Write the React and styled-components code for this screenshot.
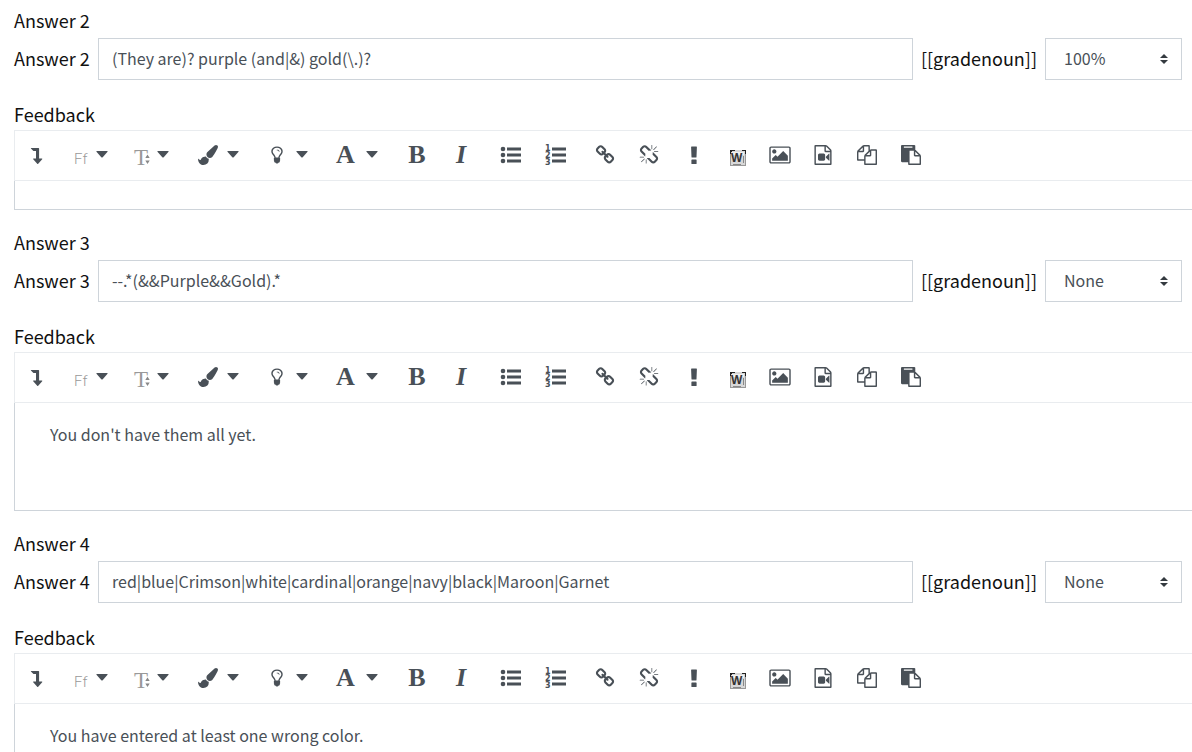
import React from "react";
import styled, { createGlobalStyle } from "styled-components";

const GlobalStyle = createGlobalStyle`
  * {
    box-sizing: border-box;
  }

  body {
    margin: 0;
    background: #fff;
    color: #111;
    font-family: "Noto Sans CJK SC", "Open Sans", sans-serif;
    font-size: 18px;
    line-height: 26px;
    overflow-x: hidden;
  }
`;

const Page = styled.main`
  padding: 7px 10px 0 14px;
`;

const AnswerBlock = styled.section`
  margin-bottom: 19px;
`;

const Title = styled.div`
  margin-bottom: 5px;
`;

const AnswerRow = styled.div`
  display: flex;
  align-items: center;
  margin-bottom: 21px;
`;

const AnswerLabel = styled.label`
  width: 84px;
  padding-bottom: 2px;
`;

const AnswerInput = styled.input`
  flex: 1;
  min-width: 0;
  height: 42px;
  padding: 0 13px 2px;
  border: 1px solid #ced4da;
  color: #495057;
  font-family: inherit;
  font-size: 16px;
`;

const GradeLabel = styled.label`
  padding: 0 8px 2px;
`;

const SelectWrap = styled.div`
  position: relative;
  width: 137px;
`;

const GradeSelect = styled.select`
  display: block;
  width: 100%;
  height: 42px;
  padding: 0 18px 2px;
  border: 1px solid #ced4da;
  border-radius: 0;
  background: #fff;
  color: #495057;
  font-family: inherit;
  font-size: 16px;
  appearance: none;
`;

const SelectArrows = styled.svg`
  position: absolute;
  top: 16px;
  right: 14px;
  pointer-events: none;
`;

const FeedbackLabel = styled.div`
  height: 29px;
`;

/* the editor runs past the right edge of the page */
const Editor = styled.div`
  margin-right: -20px;
`;

const Toolbar = styled.div`
  display: flex;
  gap: 5px;
  height: 51px;
  border: 1px solid #e9ecef;
`;

const ToolGroup = styled.div`
  display: flex;
`;

const ToolButton = styled.button`
  display: flex;
  align-items: center;
  justify-content: center;
  gap: ${props => props.$gap || 0}px;
  width: ${props => props.$width || 44}px;
  padding: 0 0 2px;
  border: none;
  background: transparent;
  color: #495057;

  svg {
    display: block;
    fill: currentColor;
    overflow: visible;
  }
`;

const Letter = styled.span`
  width: 20px;
  font-family: "Liberation Serif", serif;
  font-size: 26px;
  font-weight: 700;
  font-style: ${props => (props.$italic ? "italic" : "normal")};
  line-height: 26px;
  text-align: center;
`;

const EditorContent = styled.div`
  min-height: ${props => props.$height}px;
  padding: ${props => (props.$height > 50 ? "18px 35px" : "0 35px")};
  border: 1px solid #ced4da;
  border-top: none;
  color: #495057;
  font-size: 16px;
`;

const Icon = ({ box = "0 0 1792 1792", width = 20, height = 20, d }) => (
  <svg width={width} height={height} viewBox={box} aria-hidden="true"><path d={d} /></svg>
);

const Caret = () => <Icon box="0 0 12 7" width={12} height={7} d="M.9 0h10.200q.9 0 .4.8L6.700 6.300q-.7.6-1.400 0L.5.800Q0 0 .9 0z" />;

const paths = {
  toggle: "M4.2 3h7.3q.6 0 .6.6V13.500h2.700q.9 0 .4.7l-4 4.600q-.5.5-1 0l-4-4.600q-.5-.7.4-.7H9V6H6.700q-.3 0-.5-.3L3.900 3.600Q3.600 3 4.200 3z",
  brush: "M1615 0q70 0 122.500 46.500t52.500 116.500q0 63-45 151-332 629-465 752-97 91-218 91-126 0-216.500-92.500t-90.500-219.500q0-128 92-212l638-579q59-54 130-54zm-909 1034q39 76 106.500 130t150.500 76l1 71q4 213-129.500 347t-348.500 134q-123 0-218-46.500t-152.500-127.500-86.500-183-29-220q7 5 41 30t62 44.500 59 36.500 46 17q41 0 55-37 25-66 57.500-112.500t69.500-76 88-47.500 103-25.500 125-10.500z",
  bulb: "M1120 576q0 13-9.500 22.500t-22.500 9.500-22.500-9.500-9.500-22.500q0-46-54-71t-106-25q-13 0-22.500-9.500t-9.500-22.500 9.500-22.500 22.500-9.500q50 0 99.500 16t87 54 37.500 90zm160 0q0-72-34.500-134t-90-101.500-123-62-136.500-22.500-136.500 22.500-123 62-90 101.500-34.500 134q0 101 68 180 10 11 30.500 33t30.500 33q128 153 141 298h228q13-145 141-298 10-11 30.500-33t30.500-33q68-79 68-180zm128 0q0 155-103 268-45 49-74.500 87t-59.500 95.500-34 107.500q47 28 47 82 0 37-25 64 25 27 25 64 0 52-45 81 13 23 13 47 0 46-31.500 71t-77.500 25q-20 44-60 70t-87 26-87-26-60-70q-46 0-77.500-25t-31.500-71q0-24 13-47-45-29-45-81 0-37 25-64-25-27-25-64 0-54 47-82-4-50-34-107.500t-59.500-95.500-74.500-87q-103-113-103-268 0-99 44.500-184.500t117-142 164-89 186.500-32.500 186.500 32.500 164 89 117 142 44.500 184.500z",
  link: "M1520 1216q0-40-28-68l-208-208q-28-28-68-28-42 0-72 32 3 3 19 18.500t21.500 21.500 15 19 13 25.500 3.500 27.500q0 40-28 68t-68 28q-15 0-27.500-3.500t-25.500-13-19-15-21.500-21.500-18.500-19q-33 31-33 73 0 40 28 68l206 207q27 27 68 27 40 0 68-26l147-146q28-28 28-67zm-703-705q0-40-28-68l-206-207q-28-28-68-28-39 0-68 27l-147 146q-28 28-28 67 0 40 28 68l208 208q27 27 68 27 42 0 72-31-3-3-19-18.500t-21.500-21.500-15-19-13-25.500-3.500-27.500q0-40 28-68t68-28q15 0 27.500 3.500t25.500 13 19 15 21.500 21.500 18.500 19q33-31 33-73zm895 705q0 120-85 203l-147 146q-83 83-203 83-121 0-204-85l-206-207q-83-83-83-203 0-123 88-209l-88-88q-86 88-208 88-120 0-204-84l-208-208q-84-84-84-204t85-203l147-146q83-83 203-83 121 0 204 85l206 207q83 83 83 203 0 123-88 209l88 88q86-88 208-88 120 0 204 84l208 208q84 84 84 204z",
  unlink: "M503 1271l-256 256q-10 9-23 9-12 0-23-9-9-10-9-23t9-23l256-256q10-9 23-9t23 9q9 10 9 23t-9 23zm169 41v320q0 14-9 23t-23 9-23-9-9-23v-320q0-14 9-23t23-9 23 9 9 23zm-224-224q0 14-9 23t-23 9h-320q-14 0-23-9t-9-23 9-23 23-9h320q14 0 23 9t9 23zm1264 128q0 120-85 203l-147 146q-83 83-203 83-121 0-204-85l-334-335q-21-21-42-56l239-18 273 274q28 28 68 27.500t68-27.500l147-146q28-28 28-67 0-40-28-68l-274-275 18-239q35 21 56 42l336 336q84 86 84 204zm-617-724l-239 18-273-274q-28-28-68-28-39 0-68 27l-147 146q-28 28-28 67 0 40 28 68l274 274-18 240q-35-21-56-42l-336-336q-84-86-84-204 0-120 85-203l147-146q83-83 203-83 121 0 204 85l334 335q21 21 42 56zm633 84q0 14-9 23t-23 9h-320q-14 0-23-9t-9-23 9-23 23-9h320q14 0 23 9t9 23zm-544-544v320q0 14-9 23t-23 9-23-9-9-23v-320q0-14 9-23t23-9 23 9 9 23zm407 151l-256 256q-11 9-23 9t-23-9q-9-10-9-23t9-23l256-256q10-9 23-9t23 9q9 10 9 23t-9 23z",
  exclamation: "M7.600 1.500h4.800q.5 0 .5.5l-.4 10q0 .6-.6.6H8.100q-.6 0-.6-.6l-.4-10q0-.5.5-.5zM8 14.400h4q.6 0 .6.6v3.400q0 .6-.6.6H8q-.6 0-.6-.6V15q0-.6.6-.6z",
  picture: "M576 576q0 80-56 136t-136 56-136-56-56-136 56-136 136-56 136 56 56 136zm1024 384v448h-1408v-192l320-320 160 160 512-512zm96-704h-1600q-13 0-22.500 9.500t-9.500 22.500v1216q0 13 9.500 22.500t22.500 9.500h1600q13 0 22.500-9.500t9.500-22.500v-1216q0-13-9.500-22.500t-22.500-9.500zm160 32v1216q0 66-47 113t-113 47h-1600q-66 0-113-47t-47-113v-1216q0-66 47-113t113-47h1600q66 0 113 47t47 113z",
  video: "M1596 380q28 28 48 76t20 88v1152q0 40-28 68t-68 28h-1344q-40 0-68-28t-28-68v-1600q0-40 28-68t68-28h896q40 0 88 20t76 48zm-444-244v376h376q-10-29-22-41l-313-313q-12-12-41-22zm384 1528v-1024h-416q-40 0-68-28t-28-68v-416h-768v1536h1280zm-576-896q52 0 90 38t38 90v384q0 52-38 90t-90 38h-384q-52 0-90-38t-38-90v-384q0-52 38-90t90-38h384zm492 2q20 8 20 30v576q0 22-20 30-8 2-12 2-14 0-23-9l-265-266v-90l265-266q9-9 23-9 4 0 12 2z",
  copy: "M1696 384q40 0 68 28t28 68v1216q0 40-28 68t-68 28h-960q-40 0-68-28t-28-68v-288h-544q-40 0-68-28t-28-68v-672q0-40 20-88t48-76l408-408q28-28 76-48t88-20h416q40 0 68 28t28 68v328q68-40 128-40h416zm-544 213l-299 299h299v-299zm-640-384l-299 299h299v-299zm196 647l316-316v-416h-384v416q0 40-28 68t-68 28h-416v640h512v-256q0-40 20-88t48-76zm956 804v-1152h-384v416q0 40-28 68t-68 28h-416v640h896z",
  paste: "M768 1664h896v-640h-416q-40 0-68-28t-28-68v-416h-384v1152zm256-1440v-64q0-13-9.500-22.500t-22.500-9.500h-704q-13 0-22.500 9.500t-9.500 22.500v64q0 13 9.500 22.500t22.500 9.500h704q13 0 22.500-9.500t9.500-22.500zm256 672h299l-299-299v299zm512 128v672q0 40-28 68t-68 28h-960q-40 0-68-28t-28-68v-160h-544q-40 0-68-28t-28-68v-1344q0-40 28-68t68-28h1088q40 0 68 28t28 68v328q21 13 36 28l408 408q28 28 48 76t20 88z"
};

const FontFamilyIcon = () => (
  <svg width="14" height="20" viewBox="0 0 14 20" aria-hidden="true">
    <text x="1" y="19" fill="#999" fontFamily="Roboto, sans-serif" fontSize="15" fontWeight="300">Ff</text>
  </svg>
);

const FontSizeIcon = () => (
  <svg width="16" height="28" viewBox="0 0 16 28" aria-hidden="true">
    <text x="0" y="24" fill="#999" fontFamily="Liberation Serif, serif" fontSize="23">T</text>
    <path fill="#888" d="M13.500 13.500l2.200 3.500h-4.400zM13.500 23l2.200-3.500h-4.400z" />
  </svg>
);

const BulletListIcon = () => (
  <svg width="22" height="20" viewBox="0 0 22 20" aria-hidden="true">
    <circle cx="3" cy="4" r="2.300" />
    <circle cx="3" cy="10" r="2.300" />
    <circle cx="3" cy="16" r="2.300" />
    <path d="M7 2.600h14v2.800H7zM7 8.600h14v2.800H7zM7 14.600h14v2.800H7z" />
  </svg>
);

const NumberListIcon = () => (
  <svg width="22" height="22" viewBox="0 0 22 22" aria-hidden="true">
    <g fontFamily="DejaVu Sans, sans-serif" fontSize="8" fontWeight="700">
      <text x="0" y="7">1</text>
      <text x="0" y="14">2</text>
      <text x="0" y="21">3</text>
    </g>
    <path d="M7 3.600h14v2.800H7zM7 9.600h14v2.800H7zM7 15.600h14v2.800H7z" />
  </svg>
);

const WordIcon = () => (
  <svg width="16" height="22" viewBox="0 0 16 22" aria-hidden="true">
    <path fill="#d8d8d8" d="M0 6h16v16H0z" />
    <path fill="#f0f0f0" d="M2 8h12v3H2z" />
    <path fill="#999" d="M15 8h1v14H0V9h1v12h14z" />
    <path fill="#222" d="M0 6h5v1H2v1H1v2H0zM12 6h4v4h-1V7h-3z" />
    <text x="1" y="18" fill="#333" fontFamily="Liberation Sans, sans-serif" fontSize="12" fontWeight="700">W</text>
    <path stroke="#888" d="M13.500 12v7M3 20.500h8" />
  </svg>
);

const EditorToolbar = () => (
  <Toolbar role="toolbar">
    <ToolGroup>
      <ToolButton aria-label="Show more buttons"><Icon d={paths.toggle} box="0 0 20 20" /></ToolButton>
      <ToolButton $width={63} $gap={9} aria-label="Font family"><FontFamilyIcon /><Caret /></ToolButton>
      <ToolButton $width={58} $gap={7} aria-label="Font size"><FontSizeIcon /><Caret /></ToolButton>
      <ToolButton $width={75} $gap={8} aria-label="Font colour"><Icon d={paths.brush} width={22} /><Caret /></ToolButton>
      <ToolButton $width={68} $gap={12} aria-label="Background colour"><Icon d={paths.bulb} box="320 0 1152 1792" width={14} /><Caret /></ToolButton>
      <ToolButton $width={67} $gap={10} aria-label="Paragraph styles"><Letter>A</Letter><Caret /></ToolButton>
    </ToolGroup>
    <ToolGroup>
      <ToolButton aria-label="Bold"><Letter>B</Letter></ToolButton>
      <ToolButton aria-label="Italic"><Letter $italic>I</Letter></ToolButton>
    </ToolGroup>
    <ToolGroup>
      <ToolButton $width={46} aria-label="Unordered list"><BulletListIcon /></ToolButton>
      <ToolButton aria-label="Ordered list"><NumberListIcon /></ToolButton>
    </ToolGroup>
    <ToolGroup>
      <ToolButton aria-label="Link"><Icon d={paths.link} /></ToolButton>
      <ToolButton aria-label="Unlink"><Icon d={paths.unlink} /></ToolButton>
      <ToolButton $width={45} aria-label="Prevent automatic linking"><Icon d={paths.exclamation} box="0 0 20 20" /></ToolButton>
      <ToolButton aria-label="Import Word file"><WordIcon /></ToolButton>
      <ToolButton $width={40} aria-label="Insert image"><Icon d={paths.picture} box="-64 0 1920 1792" width={22} /></ToolButton>
      <ToolButton $width={45} aria-label="Insert video"><Icon d={paths.video} /></ToolButton>
      <ToolButton aria-label="Manage files"><Icon d={paths.copy} /></ToolButton>
      <ToolButton aria-label="Paste special"><Icon d={paths.paste} /></ToolButton>
    </ToolGroup>
  </Toolbar>
);

const answers = [
  { number: 2, value: "(They are)? purple (and|&) gold(\\.)?", grade: "100%", feedback: "", height: 29 },
  { number: 3, value: "--.*(&&Purple&&Gold).*", grade: "None", feedback: "You don't have them all yet.", height: 108 },
  { number: 4, value: "red|blue|Crimson|white|cardinal|orange|navy|black|Maroon|Garnet", grade: "None", feedback: "You have entered at least one wrong color.", height: 108 }
];

const Answer = ({ number, value, grade, feedback, height }) => (
  <AnswerBlock>
    <Title>Answer {number}</Title>
    <AnswerRow>
      <AnswerLabel htmlFor={`answer-${number}`}>Answer {number}</AnswerLabel>
      <AnswerInput type="text" id={`answer-${number}`} defaultValue={value} spellCheck={false} />
      <GradeLabel htmlFor={`grade-${number}`}>[[gradenoun]]</GradeLabel>
      <SelectWrap>
        <GradeSelect id={`grade-${number}`} defaultValue={grade}>
          <option>None</option>
          <option>100%</option>
        </GradeSelect>
        <SelectArrows width="8" height="10" viewBox="0 0 8 10" aria-hidden="true">
          <path fill="#343a40" d="M4 0l4 4H0zM4 10L0 6h8z" />
        </SelectArrows>
      </SelectWrap>
    </AnswerRow>
    <FeedbackLabel id={`feedback-${number}`}>Feedback</FeedbackLabel>
    <Editor>
      <EditorToolbar />
      <EditorContent
        $height={height}
        role="textbox"
        aria-labelledby={`feedback-${number}`}
        contentEditable
        suppressContentEditableWarning
        spellCheck={false}
      >
        {feedback}
      </EditorContent>
    </Editor>
  </AnswerBlock>
);

export default function App() {
  return (
    <Page>
      <GlobalStyle />
      {answers.map(answer => <Answer key={answer.number} {...answer} />)}
    </Page>
  );
}
